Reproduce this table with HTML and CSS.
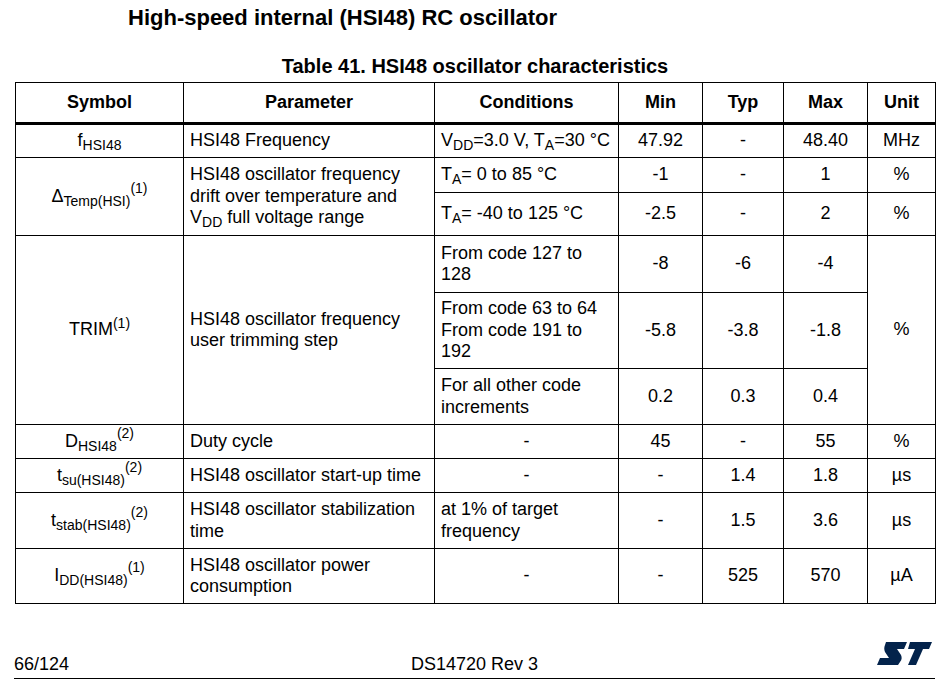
FILE: index.html
```html
<!DOCTYPE html>
<html lang="en">
<head>
<meta charset="utf-8">
<title>HSI48 oscillator characteristics</title>
<link rel="stylesheet" href="styles.css">
</head>
<body>
<div class="page">
  <h1 class="title">High-speed internal (HSI48) RC oscillator</h1>
  <div class="caption">Table 41. HSI48 oscillator characteristics</div>
  <table class="spec">
    <colgroup>
      <col class="c-sym"><col class="c-par"><col class="c-cond"><col class="c-min"><col class="c-typ"><col class="c-max"><col class="c-unit">
    </colgroup>
    <thead>
      <tr class="h-head">
        <th>Symbol</th><th>Parameter</th><th>Conditions</th><th>Min</th><th>Typ</th><th>Max</th><th>Unit</th>
      </tr>
    </thead>
    <tbody>
      <tr class="h-r1">
        <td class="sym">f<sub>HSI48</sub></td>
        <td class="txt">HSI48 Frequency</td>
        <td class="txt nowrap">V<sub>DD</sub>=3.0 V, T<sub>A</sub>=30 °C</td>
        <td class="num">47.92</td><td class="num">-</td><td class="num">48.40</td><td class="num">MHz</td>
      </tr>
      <tr class="h-r2a">
        <td class="sym" rowspan="2">Δ<sub>Temp(HSI)</sub><sup class="hi">(1)</sup></td>
        <td class="txt" rowspan="2">HSI48 oscillator frequency<br>drift over temperature and<br>V<sub>DD</sub> full voltage range</td>
        <td class="txt">T<sub>A</sub>= 0 to 85 °C</td>
        <td class="num">-1</td><td class="num">-</td><td class="num">1</td><td class="num">%</td>
      </tr>
      <tr class="h-r2b">
        <td class="txt">T<sub>A</sub>= -40 to 125 °C</td>
        <td class="num">-2.5</td><td class="num">-</td><td class="num">2</td><td class="num">%</td>
      </tr>
      <tr class="h-r3a">
        <td class="sym" rowspan="3">TRIM<sup>(1)</sup></td>
        <td class="txt" rowspan="3">HSI48 oscillator frequency<br>user trimming step</td>
        <td class="txt">From code 127 to<br>128</td>
        <td class="num">-8</td><td class="num">-6</td><td class="num">-4</td>
        <td class="num" rowspan="3">%</td>
      </tr>
      <tr class="h-r3b">
        <td class="txt">From code 63 to 64<br>From code 191 to<br>192</td>
        <td class="num">-5.8</td><td class="num">-3.8</td><td class="num">-1.8</td>
      </tr>
      <tr class="h-r3c">
        <td class="txt">For all other code<br>increments</td>
        <td class="num">0.2</td><td class="num">0.3</td><td class="num">0.4</td>
      </tr>
      <tr class="h-r4">
        <td class="sym">D<sub>HSI48</sub><sup class="hi">(2)</sup></td>
        <td class="txt">Duty cycle</td>
        <td class="num">-</td>
        <td class="num">45</td><td class="num">-</td><td class="num">55</td><td class="num">%</td>
      </tr>
      <tr class="h-r5">
        <td class="sym">t<sub>su(HSI48)</sub><sup class="hi">(2)</sup></td>
        <td class="txt">HSI48 oscillator start-up time</td>
        <td class="num">-</td>
        <td class="num">-</td><td class="num">1.4</td><td class="num">1.8</td><td class="num">µs</td>
      </tr>
      <tr class="h-r6">
        <td class="sym">t<sub>stab(HSI48)</sub><sup class="hi">(2)</sup></td>
        <td class="txt">HSI48 oscillator stabilization<br>time</td>
        <td class="txt">at 1% of target<br>frequency</td>
        <td class="num">-</td><td class="num">1.5</td><td class="num">3.6</td><td class="num">µs</td>
      </tr>
      <tr class="h-r7">
        <td class="sym">I<sub>DD(HSI48)</sub><sup class="hi">(1)</sup></td>
        <td class="txt">HSI48 oscillator power<br>consumption</td>
        <td class="num">-</td>
        <td class="num">-</td><td class="num">525</td><td class="num">570</td><td class="num">µA</td>
      </tr>
    </tbody>
  </table>
  <footer class="footer">
    <span class="pageno">66/124</span>
    <span class="docid">DS14720 Rev 3</span>
    <svg class="logo" viewBox="0 0 55 23" width="55" height="23" aria-label="ST logo">
      <path fill="#03234B" d="M9 0 H30 L27 7 H20 L24 13 C25 15 25 18 23 20 L21 23 H0 L3 16 H12 L8 10 C7 8 7 5 8 3 Z"/>
      <path fill="#03234B" d="M33 0 H55 L52 7 H46 L39 23 H31 L38 7 H31 Z"/>
    </svg>
  </footer>
</div>
</body>
</html>
```
FILE: styles.css
```css
body {
  margin: 0;
  background: #ffffff;
  color: #000000;
  font-family: "Liberation Sans", Arial, sans-serif;
}

.page {
  padding: 5px 0 0 15px;
  width: 921px;
}

.title {
  margin: 0 0 0 113px;
  font-size: 22px;
  line-height: 26px;
  font-weight: bold;
}

.caption {
  margin: 23px 0 4px 0;
  width: 920px;
  text-align: center;
  font-size: 20px;
  line-height: 24px;
  font-weight: bold;
}

.spec {
  border-collapse: collapse;
  table-layout: fixed;
  width: 920px;
  font-size: 18px;
  line-height: 21.5px;
}

.c-sym { width: 168px; }
.c-par { width: 251px; }
.c-cond { width: 184px; }
.c-min { width: 84px; }
.c-typ { width: 81px; }
.c-max { width: 84px; }
.c-unit { width: 68px; }

.spec th,
.spec td {
  border: 1px solid #000000;
  padding: 0;
  vertical-align: middle;
}

.spec th {
  font-weight: bold;
  text-align: center;
  border-bottom: 3px solid #000000;
}

.sym,
.num {
  text-align: center;
}

.txt {
  text-align: left;
  padding: 0 4px 0 6px !important;
}

.nowrap {
  white-space: nowrap;
}

.spec sub,
.spec sup {
  font-size: 14px;
  line-height: 0;
}

.spec sub {
  vertical-align: -4px;
}

.spec sup {
  vertical-align: 7px;
}

.spec sup.hi {
  vertical-align: 9px;
}

.h-head { height: 41px; }
.h-r1 { height: 34px; }
.h-r2a { height: 35px; }
.h-r2b { height: 43px; }
.h-r3a { height: 57px; }
.h-r3b { height: 76px; }
.h-r3c { height: 56px; }
.h-r4 { height: 34px; }
.h-r5 { height: 34px; }
.h-r6 { height: 56px; }
.h-r7 { height: 55px; }

.footer {
  display: grid;
  grid-template-columns: 1fr auto 1fr;
  align-items: end;
  margin: 38px 0 0 -1px;
  width: 921px;
  padding-bottom: 3px;
  border-bottom: 1px solid #000000;
  font-size: 18px;
  line-height: 21px;
}

.pageno {
  justify-self: start;
}

.docid {
  justify-self: center;
}

.logo {
  display: block;
  justify-self: end;
  margin: 0 3px 10px 0;
}
```
